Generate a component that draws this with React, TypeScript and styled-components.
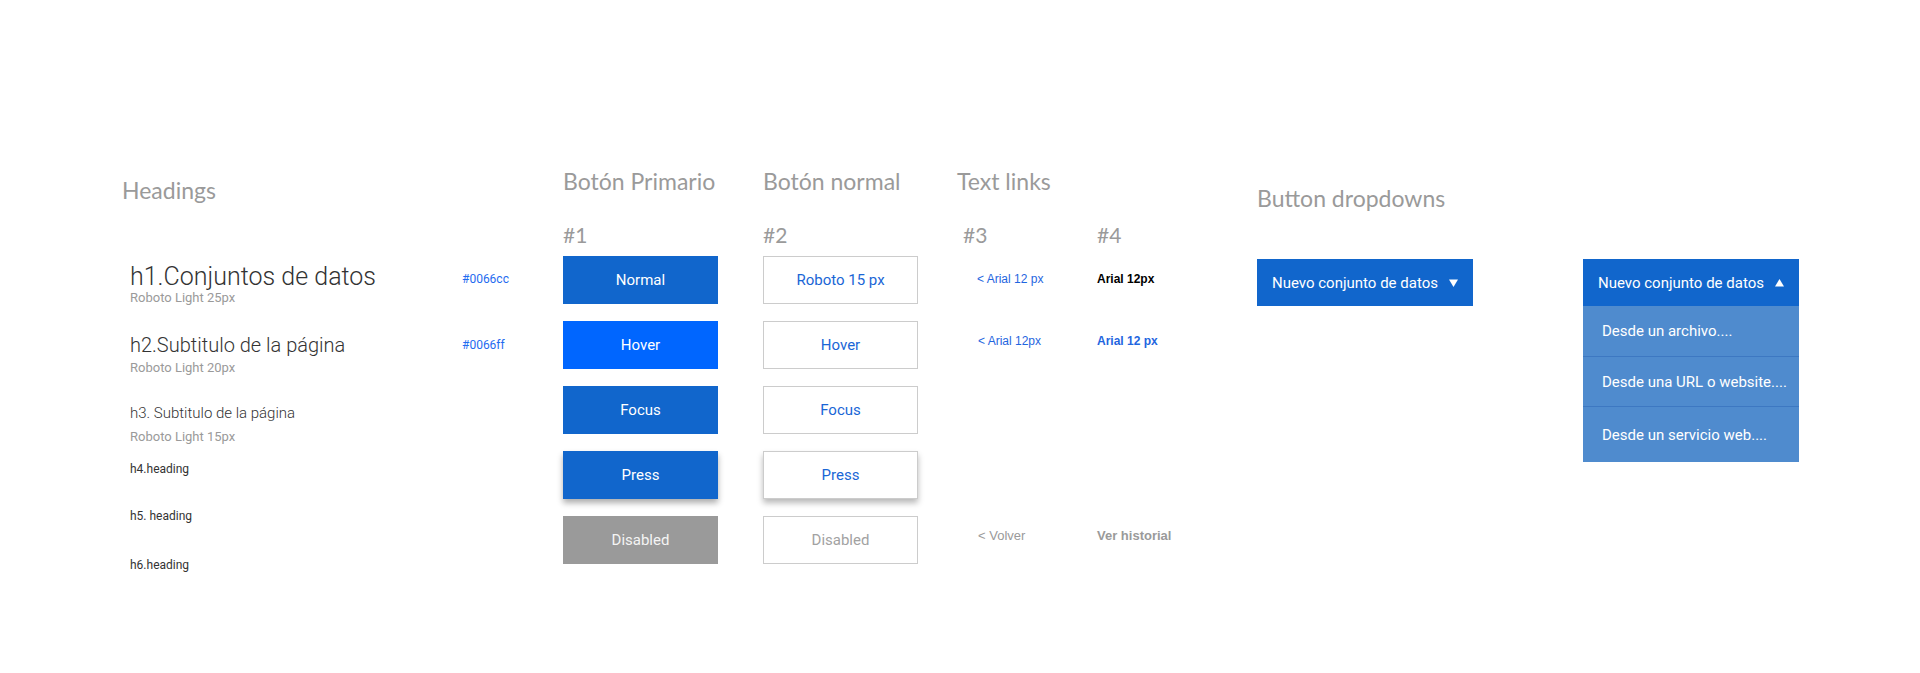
import React from "react";
import styled, { createGlobalStyle, css } from "styled-components";

const GlobalStyle = createGlobalStyle`
  html, body { margin: 0; padding: 0; background: #ffffff; }
  body {
    width: 1920px;
    height: 673px;
    overflow: hidden;
    font-family: Roboto, "Liberation Sans", Arial, sans-serif;
  }
  * { box-sizing: border-box; }
`;

const Page = styled.main`
  display: flex;
  align-items: flex-start;
  width: 1920px;
  height: 673px;
  padding: 170px 0 0 122px;
`;

const Section = styled.section<{ $w?: number }>`
  display: flex;
  flex-direction: column;
  flex: none;
  width: ${(p) => (p.$w ? `${p.$w}px` : "auto")};
`;

const SectionTitle = styled.h2<{ $mt?: number }>`
  margin: ${(p) => p.$mt ?? 0}px 0 0;
  font-family: Lato, "Open Sans", sans-serif;
  font-weight: 400;
  font-size: 23px;
  line-height: 23px;
  color: #9a9a9a;
  white-space: nowrap;
`;

const Number = styled.div`
  margin-top: 31px;
  font-family: Lato, "Open Sans", sans-serif;
  font-size: 21px;
  line-height: 21px;
  color: #9a9a9a;
`;

/* ---------- Headings ---------- */

const HeadingRow = styled.div<{ $mt: number }>`
  display: grid;
  grid-template-columns: 332px auto;
  align-items: start;
  padding-left: 8px;
  margin-top: ${(p) => p.$mt}px;
`;

const HeadingSample = styled.div<{ $size: number; $weight?: number }>`
  font-family: Roboto, sans-serif;
  font-size: ${(p) => p.$size}px;
  line-height: ${(p) => p.$size}px;
  font-weight: ${(p) => p.$weight ?? 400};
  color: #333333;
  white-space: nowrap;
`;

const HexCode = styled.span<{ $offset: number }>`
  margin-top: ${(p) => p.$offset}px;
  font-family: Roboto, sans-serif;
  font-size: 12px;
  line-height: 12px;
  color: #1f6cf0;
`;

const HeadingNote = styled.div<{ $mt: number }>`
  margin-top: ${(p) => p.$mt}px;
  padding-left: 8px;
  font-family: Roboto, sans-serif;
  font-size: 13px;
  line-height: 13px;
  color: #9a9a9a;
`;

/* ---------- Buttons ---------- */

const ButtonStack = styled.div`
  display: flex;
  flex-direction: column;
  gap: 17px;
  margin-top: 11px;
`;

type BtnState = "normal" | "hover" | "focus" | "press" | "disabled";

const PrimaryButton = styled.button<{ $state: BtnState }>`
  width: 155px;
  height: 48px;
  border: none;
  padding: 0;
  font-family: Roboto, sans-serif;
  font-size: 15px;
  color: #ffffff;
  background: #1166cc;
  ${(p) => p.$state === "hover" && css`background: #0066ff;`}
  ${(p) => p.$state === "press" && css`box-shadow: 0 4px 6px rgba(0, 0, 0, 0.32);`}
  ${(p) => p.$state === "disabled" && css`background: #9a9a9a; color: #f4f4f4;`}
`;

const OutlineButton = styled.button<{ $state: BtnState }>`
  width: 155px;
  height: 48px;
  padding: 0;
  background: #ffffff;
  border: 1px solid #cccccc;
  font-family: Roboto, sans-serif;
  font-size: 15px;
  color: #1a66d6;
  ${(p) => p.$state === "press" && css`box-shadow: 0 4px 6px rgba(0, 0, 0, 0.28);`}
  ${(p) => p.$state === "disabled" && css`color: #a2a2a2;`}
`;

/* ---------- Text links ---------- */

const LinkGrid = styled.div`
  display: grid;
  grid-template-columns: 134px auto;
  padding-left: 6px;
`;

const LinkColumn = styled.div`
  display: flex;
  flex-direction: column;
  align-items: flex-start;
`;

const TextLink = styled.a<{
  $mt: number;
  $tone: "blue" | "black" | "grey";
  $bold?: boolean;
  $indent?: number;
  $size?: number;
}>`
  margin-top: ${(p) => p.$mt}px;
  margin-left: ${(p) => p.$indent ?? 0}px;
  font-family: "Liberation Sans", Arial, sans-serif;
  font-size: ${(p) => p.$size ?? 12}px;
  line-height: ${(p) => p.$size ?? 12}px;
  font-weight: ${(p) => (p.$bold ? 700 : 400)};
  text-decoration: none;
  white-space: nowrap;
  color: ${(p) => (p.$tone === "blue" ? "#1f66e0" : p.$tone === "black" ? "#000000" : "#9a9a9a")};
`;

/* ---------- Dropdowns ---------- */

const DropdownRow = styled.div`
  display: flex;
  gap: 110px;
  margin-top: 49px;
`;

const Dropdown = styled.div`
  width: 216px;
  display: flex;
  flex-direction: column;
`;

const DropdownButton = styled.button`
  height: 47px;
  display: flex;
  align-items: center;
  justify-content: space-between;
  padding: 0 15px 0 15px;
  border: none;
  background: #1166cc;
  color: #ffffff;
  font-family: Roboto, sans-serif;
  font-size: 15px;
  white-space: nowrap;
`;

const Menu = styled.ul`
  list-style: none;
  margin: 0;
  padding: 0;
  background: #4f8bce;
`;

const MenuItem = styled.li`
  height: 50px;
  display: flex;
  align-items: center;
  padding-left: 19px;
  color: #ffffff;
  font-family: Roboto, sans-serif;
  font-size: 15px;
  white-space: nowrap;
  & + & { border-top: 1px solid #3d78c2; }
  &:last-child { height: 56px; }
`;

const Caret = ({ up }: { up?: boolean }) => (
  <svg width="9" height="8" viewBox="0 0 9 8" aria-hidden="true">
    <polygon points={up ? "0,7.5 9,7.5 4.5,0" : "0,0.5 9,0.5 4.5,8"} fill="#ffffff" />
  </svg>
);

const states: { s: BtnState; label: string; outline: string }[] = [
  { s: "normal", label: "Normal", outline: "Roboto 15 px" },
  { s: "hover", label: "Hover", outline: "Hover" },
  { s: "focus", label: "Focus", outline: "Focus" },
  { s: "press", label: "Press", outline: "Press" },
  { s: "disabled", label: "Disabled", outline: "Disabled" },
];

export default function App() {
  return (
    <>
      <GlobalStyle />
      <Page>
        <Section $w={441}>
          <SectionTitle $mt={9}>Headings</SectionTitle>
          <HeadingRow $mt={62}>
            <HeadingSample $size={25} $weight={300}>h1.Conjuntos de datos</HeadingSample>
            <HexCode $offset={9}>#0066cc</HexCode>
          </HeadingRow>
          <HeadingNote $mt={2}>Roboto Light 25px</HeadingNote>
          <HeadingRow $mt={31}>
            <HeadingSample $size={20} $weight={300}>h2.Subtitulo de la página</HeadingSample>
            <HexCode $offset={4}>#0066ff</HexCode>
          </HeadingRow>
          <HeadingNote $mt={6}>Roboto Light 20px</HeadingNote>
          <HeadingRow $mt={32}>
            <HeadingSample $size={15} $weight={300}>h3. Subtitulo de la página</HeadingSample>
          </HeadingRow>
          <HeadingNote $mt={9}>Roboto Light 15px</HeadingNote>
          <HeadingRow $mt={20}>
            <HeadingSample $size={12}>h4.heading</HeadingSample>
          </HeadingRow>
          <HeadingRow $mt={35}>
            <HeadingSample $size={12}>h5. heading</HeadingSample>
          </HeadingRow>
          <HeadingRow $mt={37}>
            <HeadingSample $size={12}>h6.heading</HeadingSample>
          </HeadingRow>
        </Section>

        <Section $w={200}>
          <SectionTitle>Botón Primario</SectionTitle>
          <Number>#1</Number>
          <ButtonStack>
            {states.map((b) => (
              <PrimaryButton key={b.s} $state={b.s}>
                {b.label}
              </PrimaryButton>
            ))}
          </ButtonStack>
        </Section>

        <Section $w={194}>
          <SectionTitle>Botón normal</SectionTitle>
          <Number>#2</Number>
          <ButtonStack>
            {states.map((b) => (
              <OutlineButton key={b.s} $state={b.s}>
                {b.outline}
              </OutlineButton>
            ))}
          </ButtonStack>
        </Section>

        <Section $w={300}>
          <SectionTitle>Text links</SectionTitle>
          <LinkGrid>
            <LinkColumn>
              <Number>#3</Number>
              <TextLink $mt={28} $indent={14} $tone="blue">&lt; Arial 12 px</TextLink>
              <TextLink $mt={50} $indent={15} $tone="blue">&lt; Arial 12px</TextLink>
              <TextLink $mt={182} $indent={15} $size={13} $tone="grey">&lt; Volver</TextLink>
            </LinkColumn>
            <LinkColumn>
              <Number>#4</Number>
              <TextLink $mt={28} $tone="black" $bold>Arial 12px</TextLink>
              <TextLink $mt={50} $tone="blue" $bold>Arial 12 px</TextLink>
              <TextLink $mt={182} $size={13} $tone="grey" $bold>Ver historial</TextLink>
            </LinkColumn>
          </LinkGrid>
        </Section>

        <Section>
          <SectionTitle $mt={17}>Button dropdowns</SectionTitle>
          <DropdownRow>
            <Dropdown>
              <DropdownButton>
                Nuevo conjunto de datos
                <Caret />
              </DropdownButton>
            </Dropdown>
            <Dropdown>
              <DropdownButton>
                Nuevo conjunto de datos
                <Caret up />
              </DropdownButton>
              <Menu>
                <MenuItem>Desde un archivo....</MenuItem>
                <MenuItem>Desde una URL o website....</MenuItem>
                <MenuItem>Desde un servicio web....</MenuItem>
              </Menu>
            </Dropdown>
          </DropdownRow>
        </Section>
      </Page>
    </>
  );
}
